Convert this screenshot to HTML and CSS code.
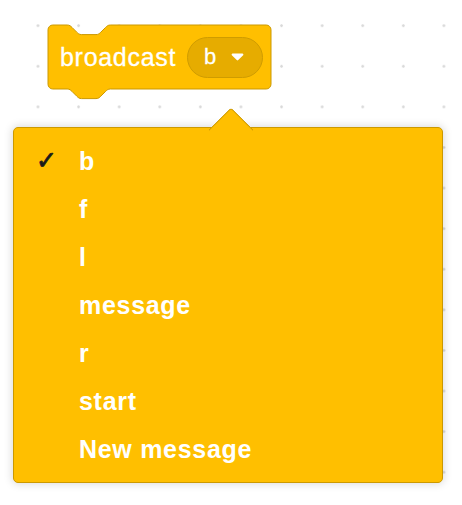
FILE: index.html
```html
<!DOCTYPE html>
<html>
  <head>
    <meta charset="utf-8">
    <title>Broadcast</title>
    <link rel="stylesheet" href="styles.css">
  </head>
  <body>
    <div class="workspace">
      <div class="block">
        <svg class="block-shape" width="223" height="76" viewBox="0 0 185.83 63.33">
          <path d="M0,4 A4,4 0 0 1 4,0 H16 c2,0 3,1 4,2 l4,4 c1,1 2,2 4,2 h12 c2,0 3,-1 4,-2 l4,-4 c1,-1 2,-2 4,-2 H181.83 a4,4 0 0 1 4,4 V49.33 a4,4 0 0 1 -4,4 H52 c-2,0 -3,1 -4,2 l-4,4 c-1,1 -2,2 -4,2 h-12 c-2,0 -3,-1 -4,-2 l-4,-4 c-1,-1 -2,-2 -4,-2 H4 a4,4 0 0 1 -4,-4 z"/>
        </svg>
        <span class="block-label">broadcast</span>
        <span class="field">
          <span class="field-value">b</span>
          <svg class="field-arrow" width="13" height="8" viewBox="0 0 13 8">
            <path d="M1.6,0.6 H11.4 a1,1 0 0 1 0.75,1.65 L7.25,7.1 a1,1 0 0 1 -1.5,0 L0.85,2.25 A1,1 0 0 1 1.6,0.6 z"/>
          </svg>
        </span>
      </div>

      <ul class="menu">
        <li class="menu-item"><span class="check">✓</span>b</li>
        <li class="menu-item"><span class="check"></span>f</li>
        <li class="menu-item"><span class="check"></span>l</li>
        <li class="menu-item"><span class="check"></span>message</li>
        <li class="menu-item"><span class="check"></span>r</li>
        <li class="menu-item"><span class="check"></span>start</li>
        <li class="menu-item"><span class="check"></span>New message</li>
      </ul>
    </div>
  </body>
</html>
```

FILE: styles.css
```css
* {
  margin: 0;
  padding: 0;
  box-sizing: border-box;
}

body {
  width: 462px;
  height: 505px;
  overflow: hidden;
  background-color: #fff;
  background-image: radial-gradient(circle, #d9d9d9 1px, transparent 1.6px);
  background-size: 40.6px 40.6px;
  background-position: 17.7px 5.4px;
  font-family: "Liberation Sans", Arial, sans-serif;
}

.workspace {
  padding-top: 25px;
}

/* the stack block */
.block {
  position: relative;
  display: flex;
  align-items: center;
  width: 223px;
  height: 64px;
  margin-left: 48px;
  padding: 0 10px 0 12px;
}

.block-shape {
  position: absolute;
  left: 0;
  top: 0;
  overflow: visible;
}

.block-shape path {
  fill: #ffbf00;
  stroke: #cc9900;
  stroke-width: 1px;
  vector-effect: non-scaling-stroke;
}

.block-label {
  position: relative;
  color: #fff;
  font-size: 25px;
  letter-spacing: 0.7px;
  -webkit-text-stroke: 0.3px #fff;
  margin-right: 11px;
}

.field {
  position: relative;
  display: flex;
  align-items: center;
  height: 41px;
  padding: 0 18px 0 16px;
  border: 1px solid #cf9c00;
  border-radius: 21px;
  background-color: #e6ac00;
}

.field-value {
  color: #fff;
  font-size: 22px;
  -webkit-text-stroke: 0.3px #fff;
  margin-right: 15px;
}

.field-arrow path {
  fill: #fff;
}

/* dropdown menu */
.menu {
  position: relative;
  width: 430px;
  margin: 38px 0 0 13px;
  padding: 9px 0;
  list-style: none;
  background-color: #ffbf00;
  border: 1px solid #cc9900;
  border-radius: 5px;
  box-shadow: 0 0 8px 1px rgba(0, 0, 0, 0.15);
}

.menu:before {
  content: '';
  position: absolute;
  left: 200.5px;
  top: -14.5px;
  width: 31px;
  height: 31px;
  background-color: #ffbf00;
  border-top: 1px solid #cc9900;
  border-left: 1px solid #cc9900;
  border-top-left-radius: 4px;
  transform: rotate(45deg);
}

.menu-item {
  position: relative;
  display: flex;
  align-items: center;
  height: 48px;
  padding-left: 22px;
  color: #fff;
  font-size: 25px;
  font-weight: bold;
  letter-spacing: 0.7px;
}

.check {
  display: inline-block;
  width: 43px;
  margin-top: -2px;
  color: #1a1a1a;
  font-family: "DejaVu Sans", sans-serif;
  font-size: 25px;
  font-weight: normal;
  letter-spacing: 0;
  -webkit-text-stroke: 0.8px #1a1a1a;
}
```
